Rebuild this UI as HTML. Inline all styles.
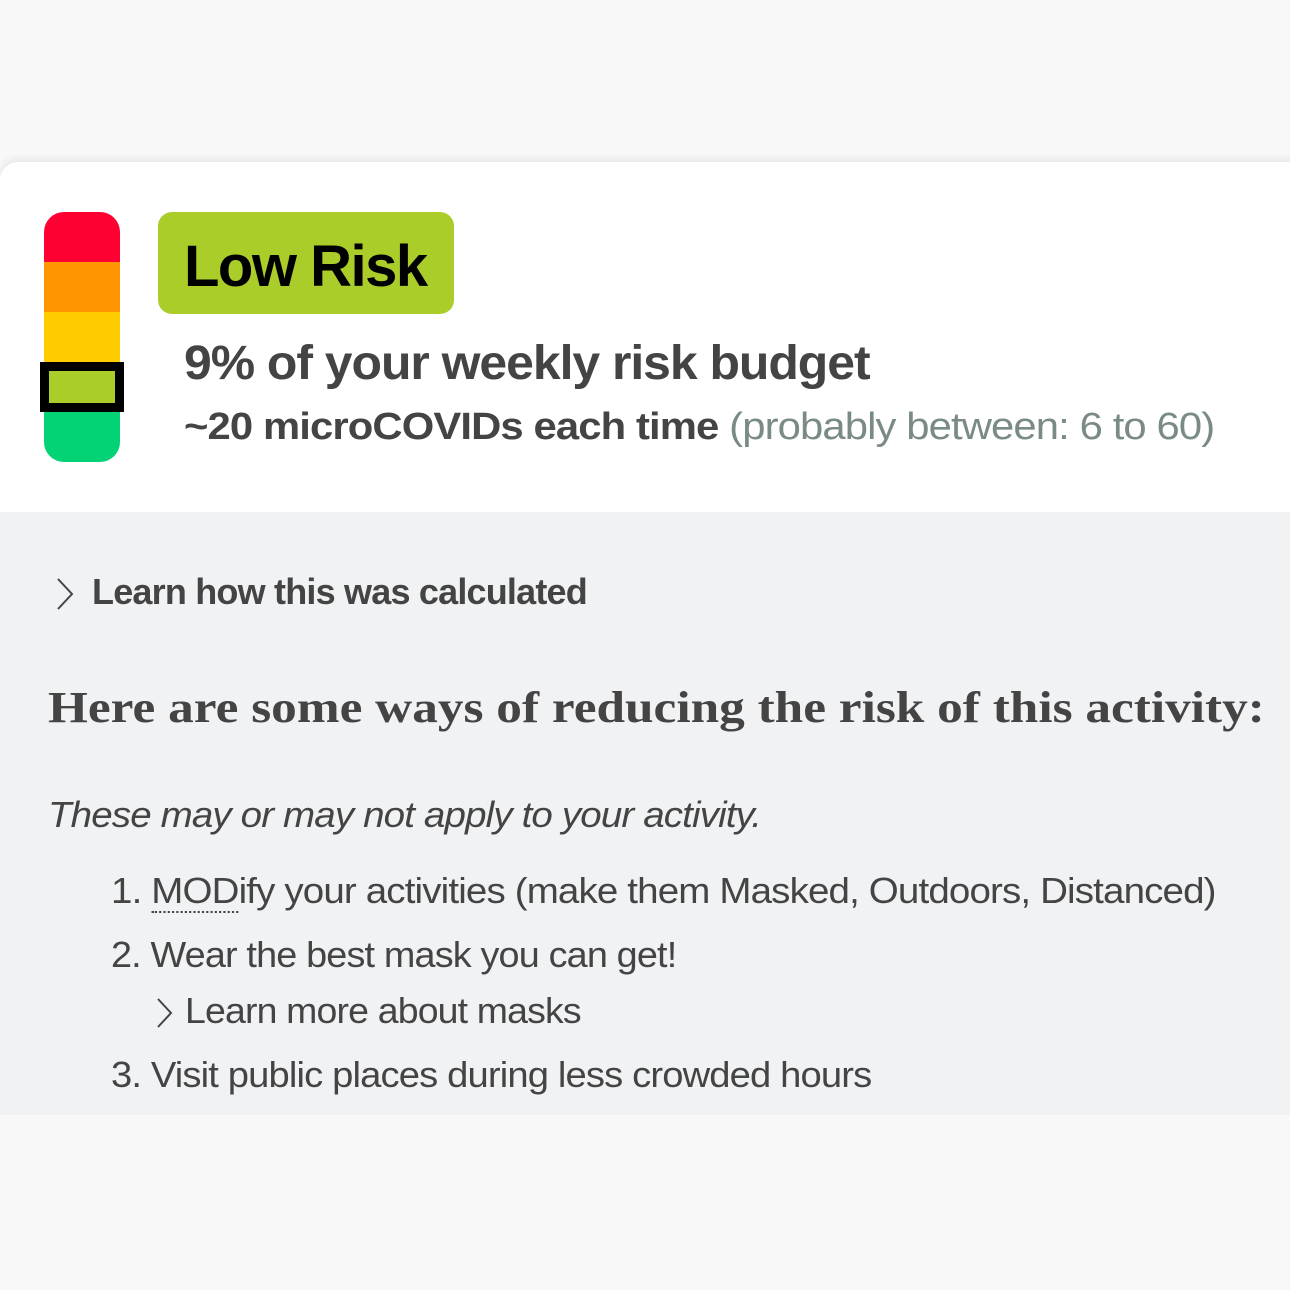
<!DOCTYPE html>
<html><head><meta charset="utf-8"><style>
html,body{margin:0;padding:0;width:1290px;height:1290px;background:#f8f8f9;overflow:hidden;font-family:"Liberation Sans",sans-serif;color:#444}
.t{position:absolute;white-space:nowrap;line-height:1;transform-origin:left bottom}
.card{position:absolute;left:0;top:162px;width:1300px;height:350px;background:#fff;border-top-left-radius:18px;box-shadow:0 -3px 8px rgba(0,0,0,0.08)}
.gray{position:absolute;left:0;top:512px;width:1290px;height:603px;background:#f1f2f4}
.bar{position:absolute;left:44px;top:212px;width:76px;height:250px;border-radius:20px;overflow:hidden}
.bar div{height:50px}
.sel{position:absolute;left:40px;top:362px;width:66px;height:32px;border:9px solid #000;background:#abcd29}
.badge{position:absolute;left:158px;top:212px;width:296px;height:102px;background:#abcd29;border-radius:14px}
</style></head><body>
<div class="card"></div>
<div class="gray"></div>
<div class="bar"><div style="background:#ff0033"></div><div style="background:#ff9500"></div><div style="background:#ffcc00"></div><div style="background:#abcd29"></div><div style="background:#03d374"></div></div>
<div class="sel"></div>
<div class="badge"></div>
<div class="t" style="left:184px;top:238px;font-size:58px;font-weight:bold;color:#000;letter-spacing:-1.5px;transform:scaleX(1.0)">Low Risk</div>
<div class="t" style="left:184px;top:340px;font-size:48px;font-weight:bold;letter-spacing:-1px;transform:scaleX(1.04)">9% of your weekly risk budget</div>
<div class="t" style="left:184px;top:408px;font-size:38px;letter-spacing:-0.8px;transform:scaleX(1.1)"><b>~20 microCOVIDs each time</b> <span style="color:#7a8a87">(probably between: 6 to 60)</span></div>
<svg style="position:absolute;left:54px;top:576px" width="24" height="36"><path d="M4 3 L18 18 L4 33" fill="none" stroke="#444" stroke-width="2"/></svg>
<div class="t" style="left:92px;top:574px;font-size:36px;font-weight:bold;letter-spacing:-0.8px;transform:scaleX(1.0)">Learn how this was calculated</div>
<div class="t" style="left:48px;top:686px;font-size:44px;font-weight:bold;font-family:'Liberation Serif',serif;transform:scaleX(1.166)">Here are some ways of reducing the risk of this activity:</div>
<div class="t" style="left:48px;top:797px;font-size:36px;font-style:italic;letter-spacing:-0.8px;transform:scaleX(1.07)">These may or may not apply to your activity.</div>
<div class="t" style="left:111px;top:873px;font-size:36px;letter-spacing:-0.8px;transform:scaleX(1.07)">1. <span style="border-bottom:2px dotted #444">MOD</span>ify your activities (make them Masked, Outdoors, Distanced)</div>
<div class="t" style="left:111px;top:937px;font-size:36px;letter-spacing:-0.8px;transform:scaleX(1.05)">2. Wear the best mask you can get!</div>
<svg style="position:absolute;left:155px;top:996px" width="22" height="36"><path d="M3 3 L16 17 L3 31" fill="none" stroke="#444" stroke-width="2"/></svg>
<div class="t" style="left:185px;top:993px;font-size:36px;letter-spacing:-0.8px;transform:scaleX(1.04)">Learn more about masks</div>
<div class="t" style="left:111px;top:1057px;font-size:36px;letter-spacing:-0.8px;transform:scaleX(1.06)">3. Visit public places during less crowded hours</div>
</body></html>
